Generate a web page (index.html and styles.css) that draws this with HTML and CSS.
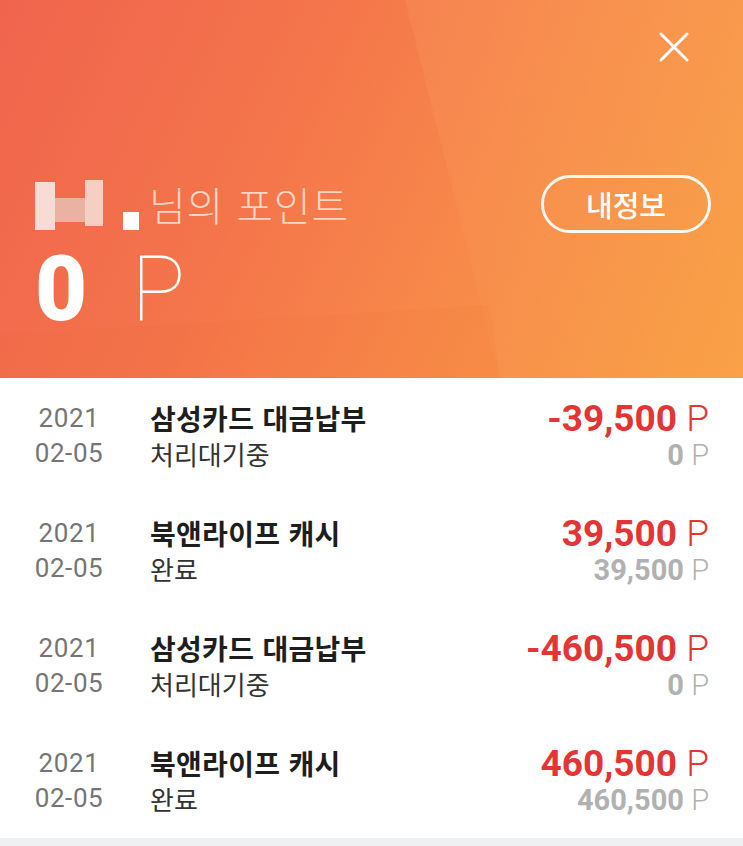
FILE: index.html
```html
<!DOCTYPE html>
<html lang="ko">
<head>
    <meta charset="UTF-8">
    <meta name="viewport" content="width=device-width, initial-scale=1.0">
    <title>포인트</title>
    <link rel="stylesheet" href="styles.css">
</head>
<body>

    <!-- Header -->
    <div class="header">
        <div class="facet facet-right"></div>
        <div class="facet facet-low"></div>

        <div class="top-bar">
            <button class="close-btn" aria-label="닫기">
                <svg width="32" height="32" viewBox="0 0 32 32">
                    <path d="M3 3 L29 29 M29 3 L3 29" stroke="#fff" stroke-width="3" stroke-linecap="round" fill="none"/>
                </svg>
            </button>
        </div>

        <div class="owner-row">
            <div class="owner">
                <span class="name-mask"><i class="m1"></i><i class="m2"></i><i class="m3"></i><i class="m4"></i></span>
                <span class="owner-label">님의 포인트</span>
            </div>
            <button class="info-btn">내정보</button>
        </div>

        <div class="total">
            <span class="total-num">0</span>
            <span class="total-unit">P</span>
        </div>
    </div>

    <!-- History -->
    <ul class="history">
        <li class="row">
            <div class="date">2021<br>02-05</div>
            <div class="desc">
                <div class="title">삼성카드 대금납부</div>
                <div class="status">처리대기중</div>
            </div>
            <div class="amount">
                <div class="main">-39,500 <span class="unit">P</span></div>
                <div class="sub">0 <span class="unit">P</span></div>
            </div>
        </li>
        <li class="row">
            <div class="date">2021<br>02-05</div>
            <div class="desc">
                <div class="title">북앤라이프 캐시</div>
                <div class="status">완료</div>
            </div>
            <div class="amount">
                <div class="main">39,500 <span class="unit">P</span></div>
                <div class="sub">39,500 <span class="unit">P</span></div>
            </div>
        </li>
        <li class="row">
            <div class="date">2021<br>02-05</div>
            <div class="desc">
                <div class="title">삼성카드 대금납부</div>
                <div class="status">처리대기중</div>
            </div>
            <div class="amount">
                <div class="main">-460,500 <span class="unit">P</span></div>
                <div class="sub">0 <span class="unit">P</span></div>
            </div>
        </li>
        <li class="row">
            <div class="date">2021<br>02-05</div>
            <div class="desc">
                <div class="title">북앤라이프 캐시</div>
                <div class="status">완료</div>
            </div>
            <div class="amount">
                <div class="main">460,500 <span class="unit">P</span></div>
                <div class="sub">460,500 <span class="unit">P</span></div>
            </div>
        </li>
    </ul>

    <div class="bottom-strip"></div>

</body>
</html>
```

FILE: styles.css
```css
body {
    margin: 0;
    padding: 0;
    width: 743px;
    height: 846px;
    overflow: hidden;
    background: #fff;
    font-family: Roboto, "Noto Sans CJK KR", sans-serif;
    color: #222;
}

/* Header */
.header {
    position: relative;
    height: 378px;
    box-sizing: border-box;
    padding: 0 32px 0 35px;
    overflow: hidden;
    background: linear-gradient(115deg, #f0644e 0%, #f4744b 35%, #f7884a 62%, #f9a044 100%);
}
.facet {
    position: absolute;
    pointer-events: none;
}
.facet-right {
    inset: 0;
    background: linear-gradient(170deg, rgba(255,210,140,0.10), rgba(255,200,120,0.04));
    clip-path: polygon(405px 0, 743px 0, 743px 378px, 500px 378px);
}
.facet-low {
    inset: 0;
    background: rgba(240, 100, 40, 0.07);
    clip-path: polygon(0 335px, 490px 305px, 500px 378px, 0 378px);
}

.top-bar {
    position: relative;
    height: 96px;
    display: flex;
    justify-content: flex-end;
    align-items: flex-start;
}
.close-btn {
    background: none;
    border: none;
    padding: 0;
    margin-top: 31px;
    margin-right: 21px;
    cursor: pointer;
    line-height: 0;
}

.owner-row {
    position: relative;
    display: flex;
    justify-content: space-between;
    align-items: center;
    margin-top: 79px;
}
.owner {
    display: flex;
    align-items: center;
}
.name-mask {
    display: inline-flex;
    align-items: flex-end;
    height: 52px;
    margin-right: 10px;
    filter: blur(0.6px);
}
.name-mask i {
    display: block;
}
.name-mask .m1 { width: 20px; height: 48px; background: #f6dcd4; }
.name-mask .m2 { width: 30px; height: 24px; background: #e9b2a2; margin-bottom: 8px; }
.name-mask .m3 { width: 18px; height: 46px; background: #f4cfc2; margin-bottom: 4px; }
.name-mask .m4 { width: 16px; height: 18px; background: #fff; margin-left: 20px; }
.owner-label {
    font-family: "Noto Sans CJK KR", sans-serif;
    font-size: 40px;
    font-weight: 300;
    color: rgba(255, 230, 220, 0.85);
    letter-spacing: 0.8px;
}

.info-btn {
    width: 170px;
    height: 58px;
    border: 3px solid #fff6ee;
    border-radius: 29px;
    background: transparent;
    color: #fff;
    font-family: "Noto Sans CJK KR", sans-serif;
    font-size: 29px;
    font-weight: 500;
    cursor: pointer;
}

.total {
    position: relative;
    margin-top: 12px;
    color: #fff;
    line-height: 1;
    display: flex;
    align-items: baseline;
}
.total-num {
    font-size: 90px;
    font-weight: 900;
}
.total-unit {
    font-size: 90px;
    font-weight: 100;
    margin-left: 44px;
}

/* History */
.history {
    list-style: none;
    margin: 0;
    padding: 0;
}
.row {
    height: 115px;
    display: flex;
    align-items: center;
    padding: 0 34px 0 34px;
    box-sizing: border-box;
}
.date {
    width: 70px;
    margin-right: 46px;
    text-align: center;
    font-size: 26px;
    line-height: 35px;
    color: #757575;
    letter-spacing: 0.6px;
}
.desc {
    flex: 1;
    font-family: "Noto Sans CJK KR", sans-serif;
    line-height: 35px;
}
.title {
    font-size: 28px;
    font-weight: 700;
    color: #1e1e1e;
    letter-spacing: 0.3px;
}
.status {
    font-size: 26px;
    color: #333;
}
.amount {
    text-align: right;
}
.amount .main {
    font-size: 37px;
    font-weight: 700;
    color: #e33436;
    line-height: 38px;
}
.amount .sub {
    font-size: 29px;
    font-weight: 700;
    color: #b1b1b1;
    line-height: 34px;
}
.amount .unit {
    font-weight: 300;
}

.bottom-strip {
    height: 8px;
    background: #eef0f1;
}
```
